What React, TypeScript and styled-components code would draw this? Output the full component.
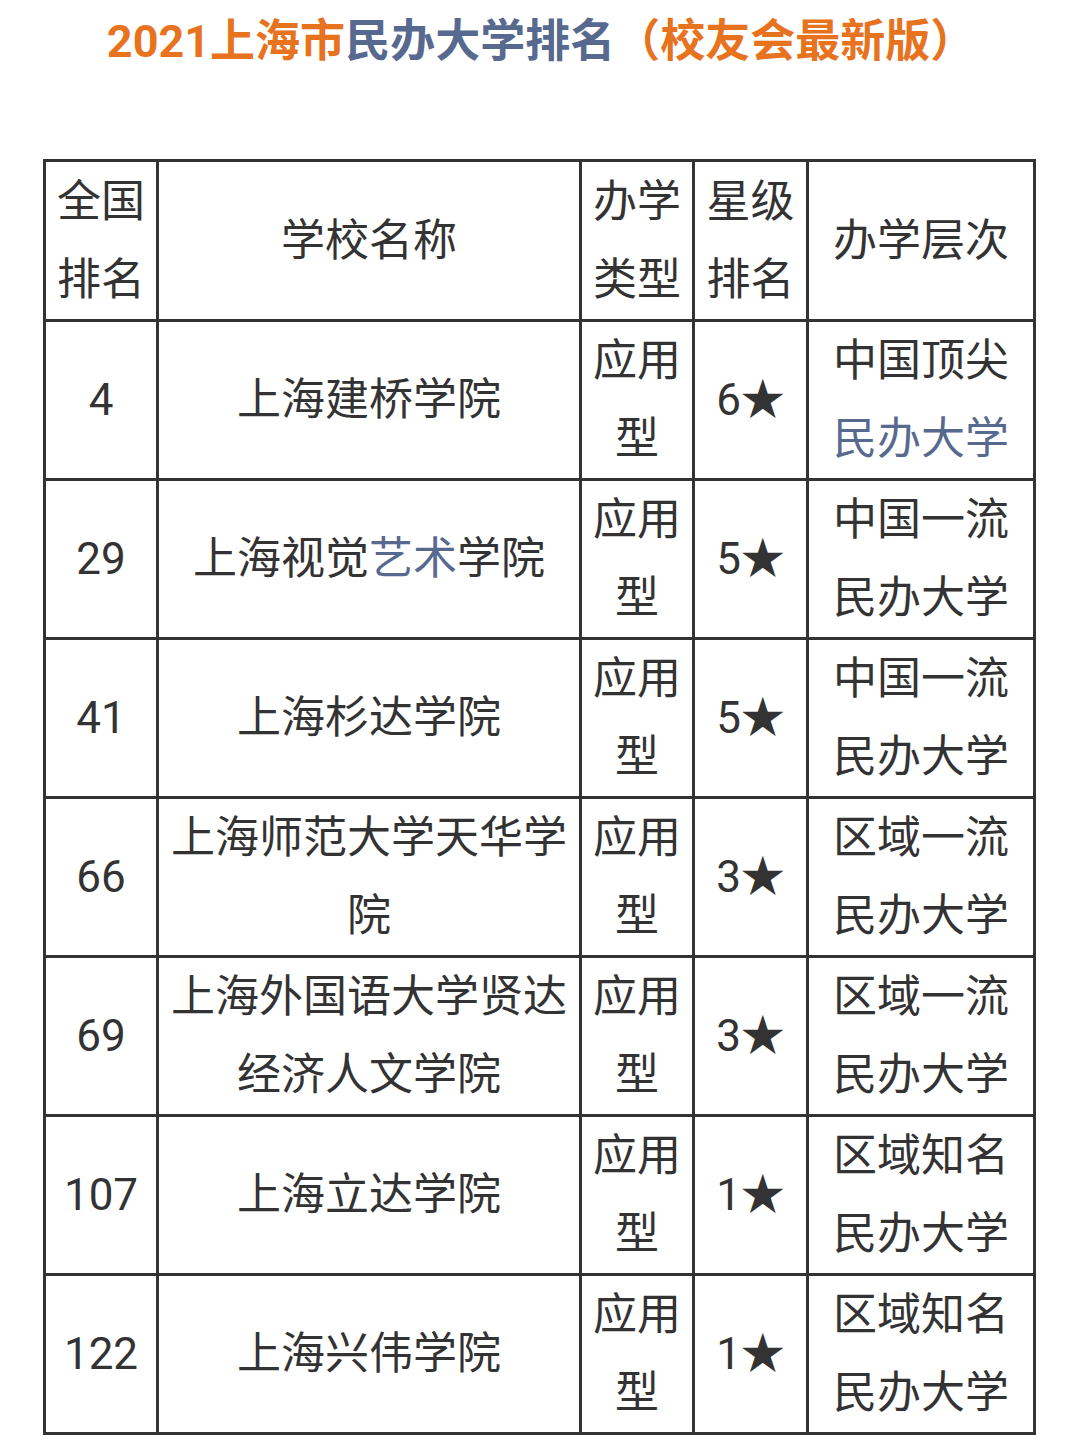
import React from "react";
import styled, { createGlobalStyle } from "styled-components";

const Global = createGlobalStyle`
  html, body { margin: 0; padding: 0; background: #ffffff; }
  body { font-family: "Roboto", "Noto Sans CJK SC", sans-serif; color: #333333; }
`;

const Page = styled.div`
  width: 1080px;
  height: 1441px;
  box-sizing: border-box;
  padding-top: 20px;
  background: #ffffff;
`;

const Title = styled.h1`
  margin: 0;
  font-family: "Roboto", "Noto Sans CJK SC", sans-serif;
  font-size: 45px;
  line-height: 44px;
  font-weight: 700;
  text-align: center;
  color: #e8731f;
  white-space: nowrap;
  padding-left: 2px;
`;

const Accent = styled.span`
  color: #58698f;
`;

const Table = styled.div`
  margin: 95px 0 0 43px;
  width: 993px;
  box-sizing: border-box;
  display: grid;
  grid-template-columns: 110px 420px 110px 111px 224px;
  grid-template-rows: 157px;
  grid-auto-rows: 156px;
  gap: 3px;
  padding: 3px;
  background: #333333;
`;

const Cell = styled.div<{ $wide?: boolean }>`
  background: #ffffff;
  display: flex;
  align-items: center;
  justify-content: center;
  text-align: center;
  padding: 0 ${(p) => (p.$wide ? "10px" : "4px")};
  font-size: 44px;
  line-height: 78px;
  color: #333333;
  overflow: hidden;
`;

const CellText = styled.div`
  width: 100%;
`;

const Blue = styled.span`
  color: #58698f;
`;

type Row = {
  rank: string;
  name: React.ReactNode;
  star: string;
  levelTop: string;
  levelBottom: React.ReactNode;
};

const rows: Row[] = [
  { rank: "4", name: "上海建桥学院", star: "6★", levelTop: "中国顶尖", levelBottom: <Blue>民办大学</Blue> },
  { rank: "29", name: <>上海视觉<Blue>艺术</Blue>学院</>, star: "5★", levelTop: "中国一流", levelBottom: "民办大学" },
  { rank: "41", name: "上海杉达学院", star: "5★", levelTop: "中国一流", levelBottom: "民办大学" },
  { rank: "66", name: "上海师范大学天华学院", star: "3★", levelTop: "区域一流", levelBottom: "民办大学" },
  { rank: "69", name: "上海外国语大学贤达经济人文学院", star: "3★", levelTop: "区域一流", levelBottom: "民办大学" },
  { rank: "107", name: "上海立达学院", star: "1★", levelTop: "区域知名", levelBottom: "民办大学" },
  { rank: "122", name: "上海兴伟学院", star: "1★", levelTop: "区域知名", levelBottom: "民办大学" },
];

export default function App() {
  return (
    <Page>
      <Global />
      <Title>
        2021上海市<Accent>民办大学排名</Accent>（校友会最新版）
      </Title>
      <Table>
        <Cell><CellText>全国排名</CellText></Cell>
        <Cell $wide><CellText>学校名称</CellText></Cell>
        <Cell><CellText>办学类型</CellText></Cell>
        <Cell><CellText>星级排名</CellText></Cell>
        <Cell><CellText>办学层次</CellText></Cell>
        {rows.map((r) => (
          <React.Fragment key={r.rank}>
            <Cell><CellText>{r.rank}</CellText></Cell>
            <Cell $wide><CellText>{r.name}</CellText></Cell>
            <Cell><CellText>应用型</CellText></Cell>
            <Cell><CellText>{r.star}</CellText></Cell>
            <Cell>
              <CellText>
                {r.levelTop}
                <br />
                {r.levelBottom}
              </CellText>
            </Cell>
          </React.Fragment>
        ))}
      </Table>
    </Page>
  );
}
